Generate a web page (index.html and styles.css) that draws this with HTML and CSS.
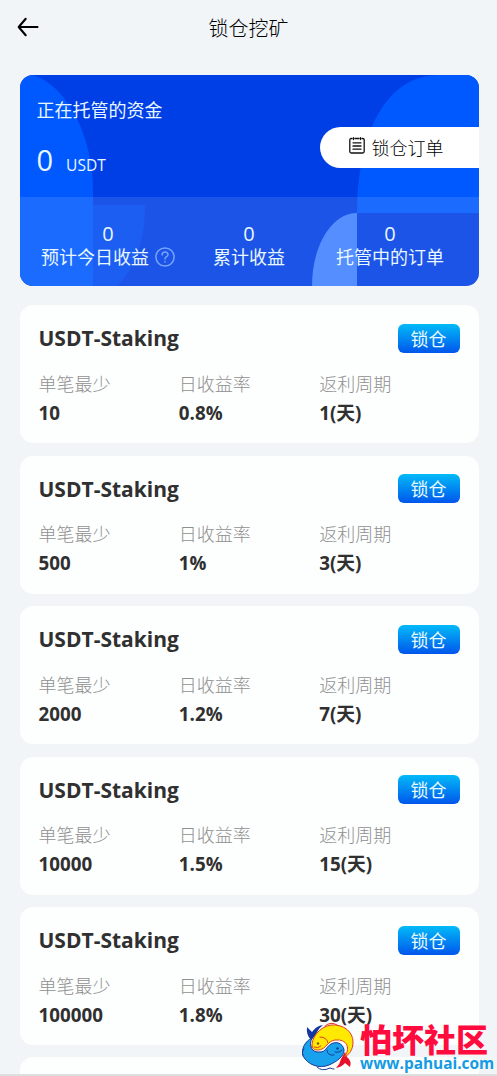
FILE: index.html
```html
<!DOCTYPE html>
<html lang="zh-CN">
<head>
<meta charset="utf-8">
<title>锁仓挖矿</title>
<link rel="stylesheet" href="styles.css">
</head>
<body>
<div class="page">
<header class="topbar">
  <svg class="back" width="22" height="20" viewBox="0 0 22 20"><path d="M8.7 1.8 1.7 10 8.7 18.2M2 10h18.5" fill="none" stroke="#000" stroke-width="2.1" stroke-linecap="round" stroke-linejoin="round"/></svg>
  <h1 class="heading">锁仓挖矿</h1>
</header>
<main class="content">
  <section class="hero">
    <svg class="hero-art" width="459" height="211" viewBox="0 0 459 211">
      <path d="M0 0H12C44 8 73 58 73 116V211H0Z" fill="#0059ff"/>
      <path d="M337 138C337 60 365 0 419 0H459V138Z" fill="#0059ff"/>
      <path d="M73 130H125C125 165 116 190 98 211H73Z" fill="#004bf0"/>
      <path d="M292 211C292 170 312 138 337 138V211Z" fill="#3f80ff"/>
    </svg>
    <div class="funds">
      <div class="funds-label">正在托管的资金</div>
      <div class="funds-amount"><span class="amount">0</span><span class="unit">USDT</span></div>
    </div>
    <div class="orders">
      <svg width="16" height="17" viewBox="0 0 16 17"><path d="M3 1.5H2.2Q.8 1.5.8 3V14.5Q.8 16 2.2 16H13.8Q15.2 16 15.2 14.5V3Q15.2 1.5 13.8 1.5H13M6 1.5h4M4.5.7v1.8M11.5.7v1.8M4 5.8h8M4 9h8M4 12.2h8" fill="none" stroke="#111" stroke-width="1.3" stroke-linecap="round"/></svg>
      <span>锁仓订单</span>
    </div>
    <div class="stats">
      <div class="stat first"><b class="num">0</b><span class="stat-label">预计今日收益</span>
        <svg class="help" width="20" height="20" viewBox="0 0 20 20" fill="none" stroke="#76a4ff" stroke-width="1.5" stroke-linecap="round"><circle cx="10" cy="10" r="9.1"/><path d="M7.1 7.9C7.1 4 13 4.1 13 7.7 13 9.8 10 9.7 10 12M10 14.6v.3"/></svg>
      </div>
      <div class="stat"><b class="num">0</b><span class="stat-label">累计收益</span></div>
      <div class="stat"><b class="num">0</b><span class="stat-label">托管中的订单</span></div>
    </div>
  </section>

  <article class="card">
    <div class="card-head"><h2 class="name">USDT-Staking</h2><button class="lock">锁仓</button></div>
    <dl class="facts"><div><dt>单笔最少</dt><dd>10</dd></div><div><dt>日收益率</dt><dd>0.8%</dd></div><div><dt>返利周期</dt><dd>1(天)</dd></div></dl>
  </article>
  <article class="card">
    <div class="card-head"><h2 class="name">USDT-Staking</h2><button class="lock">锁仓</button></div>
    <dl class="facts"><div><dt>单笔最少</dt><dd>500</dd></div><div><dt>日收益率</dt><dd>1%</dd></div><div><dt>返利周期</dt><dd>3(天)</dd></div></dl>
  </article>
  <article class="card">
    <div class="card-head"><h2 class="name">USDT-Staking</h2><button class="lock">锁仓</button></div>
    <dl class="facts"><div><dt>单笔最少</dt><dd>2000</dd></div><div><dt>日收益率</dt><dd>1.2%</dd></div><div><dt>返利周期</dt><dd>7(天)</dd></div></dl>
  </article>
  <article class="card">
    <div class="card-head"><h2 class="name">USDT-Staking</h2><button class="lock">锁仓</button></div>
    <dl class="facts"><div><dt>单笔最少</dt><dd>10000</dd></div><div><dt>日收益率</dt><dd>1.5%</dd></div><div><dt>返利周期</dt><dd>15(天)</dd></div></dl>
  </article>
  <article class="card">
    <div class="card-head"><h2 class="name">USDT-Staking</h2><button class="lock">锁仓</button></div>
    <dl class="facts"><div><dt>单笔最少</dt><dd>100000</dd></div><div><dt>日收益率</dt><dd>1.8%</dd></div><div><dt>返利周期</dt><dd>30(天)</dd></div></dl>
  </article>
  <article class="card"></article>
</main>
<div class="watermark">
  <svg class="fish" width="54" height="50" viewBox="0 0 54 50" stroke-linejoin="round" stroke-linecap="round">
    <path d="M9 18Q4 13 5 5L10 10Q14 4 21 3 15 8 14 13Z" fill="#1238a0"/>
    <path d="M43 30 45 35Q50 39 48 45L43 41Q40 45 34 46 38 42 39 37Z" fill="#e6102a"/>
    <path d="M10 25C9 16 17 5 29 3 42 2 51 10 51 20 51 28 47 33 42 35 49 27 45 18 36 18 27 17 25 25 20 27 16 29 11 28 10 25Z" fill="#ffe900" stroke="#e33a25" stroke-width="1"/>
    <path d="M23 4Q29-1 35 3" fill="none" stroke="#e33a25"/>
    <path d="M10 16C3 19-1 27 1 34 6 43 17 47 27 43 36 39 42 34 42 28 41 21 34 19 29 22 24 25 24 30 18 30 10 31 6 24 10 16Z" fill="#18a2ed" stroke="#173b91" stroke-width="1"/>
    <path d="M2 27Q-1 29 1 33M15 45Q20 50 28 46 31 47 32 47" fill="none" stroke="#173b91"/>
    <path d="M18 15Q25 15 26 21M12 25Q16 27 19 24" fill="none" stroke="#e33a25"/>
    <path d="M25 28Q25 34 32 33M33 30Q38 31 40 28" fill="none" stroke="#173b91"/>
    <circle cx="16" cy="21.5" r="1.2" fill="#74511b"/><circle cx="35.5" cy="26.5" r="1.2" fill="#173b91"/>
  </svg>
  <div class="mark-text"><div class="mark-name">怕坏社区</div><div class="mark-url">www.pahuai.com</div></div>
</div>
</div>
</body>
</html>
```
FILE: styles.css
```css
* { box-sizing: border-box; }
body { margin: 0; background: #f1f5f7; font-family: "Open Sans", "Noto Sans", "Noto Sans CJK SC", sans-serif; }
h1, h2, dl, dd { margin: 0; }
.page { position: relative; height: 1076px; overflow: hidden; border-bottom: 2px solid #dcdee0; }
.topbar { display: grid; grid-template-columns: 60px 1fr 60px; align-items: center; height: 56px; }
.back { margin-left: 16.5px; margin-top: -2px; }
.heading { font-size: 20px; line-height: 28px; font-weight: 300; text-align: center; color: #000; padding-top: 1px; }
.content { display: flex; flex-direction: column; gap: 12.4px; padding: 19px 18.5px 0 19.5px; }
.hero { position: relative; flex: none; height: 211px; margin-bottom: 7.1px; border-radius: 13px; background: #003fe6; color: #e9f8ff; overflow: hidden; display: flex; flex-direction: column; justify-content: space-between; }
.hero-art { position: absolute; inset: 0; }
.funds { position: relative; padding: 21px 17px 0; }
.funds-label { font-size: 18px; line-height: 28px; }
.funds-amount { display: flex; align-items: baseline; gap: 13px; line-height: 36px; margin-top: 18px; }
.amount { font-size: 29px; }
.unit { font-size: 15.5px; }
.orders { position: absolute; top: 52px; right: 0; width: 158.5px; height: 41px; border-radius: 21px 0 0 21px; background: #fff; color: #000; display: flex; align-items: center; gap: 7px; padding-left: 28.5px; font-size: 18px; font-weight: 300; }
.orders svg { margin-top: -4px; }
.orders span { line-height: 26px; }
.stats { position: relative; height: 89px; padding: 25px 18px 0; display: grid; grid-template-columns: repeat(3, 1fr); background: rgba(255, 255, 255, .11); }
.stat { position: relative; display: flex; flex-direction: column; align-items: center; }
.stat.first { right: 13px; }
.num { font-size: 20px; line-height: 24px; font-weight: 400; }
.first .num { margin-left: 26px; }
.stat-label { font-size: 18px; line-height: 24px; margin-top: -1px; white-space: nowrap; }
.help { position: absolute; left: 130px; top: 25px; }
.card { flex: none; height: 138px; padding: 18.5px 19px 0; border-radius: 13px; background: #fdfefe; }
.card-head { display: flex; justify-content: space-between; align-items: center; height: 29px; }
.name { font-size: 21px; line-height: 28px; font-weight: 700; color: #303030; }
.lock { width: 62px; height: 29px; border: 0; border-radius: 6px; padding: 0; background: linear-gradient(#02baf8, #0056eb); color: #e6faff; font: 18px/29px "Noto Sans CJK SC", sans-serif; }
.facts { display: grid; grid-template-columns: repeat(3, 1fr); margin-top: 16px; }
.facts dt { font-size: 18px; line-height: 30px; font-weight: 300; color: #909090; }
.facts dd { font-size: 18.8px; line-height: 28px; font-weight: 700; color: #303030; }
.watermark { position: absolute; left: 302px; top: 1022px; display: flex; }
.mark-text { width: 136px; margin-left: 4px; white-space: nowrap; display: grid; grid-template-rows: 32px 20px; }
.mark-name { font: 900 32px/32px "Noto Sans CJK SC", sans-serif; color: #ff0b3d; }
.mark-url { font: 700 15.4px/20px "Open Sans", sans-serif; color: #159be3; }
```
